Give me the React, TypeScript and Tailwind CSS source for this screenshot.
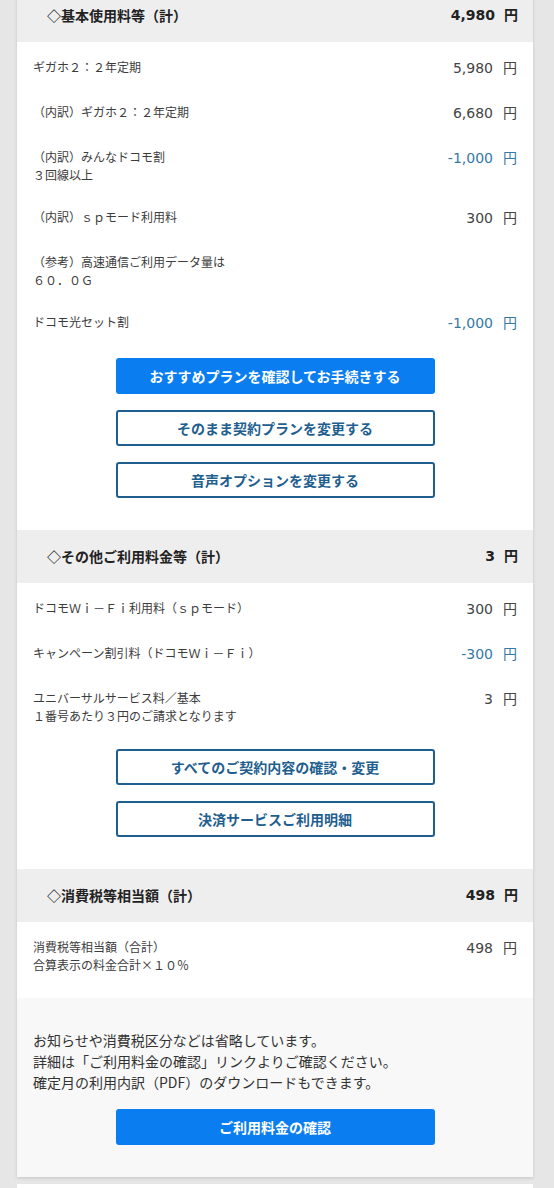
type Row = {
  label: string[];
  amount?: string;
  minus?: boolean;
};

type Btn = {
  label: string;
  primary?: boolean;
};

type Section = {
  title: string;
  total: string;
  rows: Row[];
  buttons?: Btn[];
  last?: boolean;
};

const jp = "font-['Noto_Sans_CJK_JP',sans-serif]";
const num = "font-['DejaVu_Sans','Noto_Sans_CJK_JP',sans-serif]";

const sections: Section[] = [
  {
    title: "◇基本使用料等（計）",
    total: "4,980",
    rows: [
      { label: ["ギガホ２：２年定期"], amount: "5,980" },
      { label: ["（内訳）ギガホ２：２年定期"], amount: "6,680" },
      { label: ["（内訳）みんなドコモ割", "３回線以上"], amount: "-1,000", minus: true },
      { label: ["（内訳）ｓｐモード利用料"], amount: "300" },
      { label: ["（参考）高速通信ご利用データ量は", "６０．０Ｇ"] },
      { label: ["ドコモ光セット割"], amount: "-1,000", minus: true },
    ],
    buttons: [
      { label: "おすすめプランを確認してお手続きする", primary: true },
      { label: "そのまま契約プランを変更する" },
      { label: "音声オプションを変更する" },
    ],
  },
  {
    title: "◇その他ご利用料金等（計）",
    total: "3",
    rows: [
      { label: ["ドコモＷｉ－Ｆｉ利用料（ｓｐモード）"], amount: "300" },
      { label: ["キャンペーン割引料（ドコモＷｉ－Ｆｉ）"], amount: "-300", minus: true },
      { label: ["ユニバーサルサービス料／基本", "１番号あたり３円のご請求となります"], amount: "3" },
    ],
    buttons: [
      { label: "すべてのご契約内容の確認・変更" },
      { label: "決済サービスご利用明細" },
    ],
  },
  {
    title: "◇消費税等相当額（計）",
    total: "498",
    rows: [{ label: ["消費税等相当額（合計）", "合算表示の料金合計×１０％"], amount: "498" }],
    last: true,
  },
];

function Button({ btn }: { btn: Btn }) {
  return (
    <button
      type="button"
      className={`flex h-9 w-[319px] items-center justify-center rounded-[3px] text-[14px] font-bold ${jp} ${
        btn.primary
          ? "bg-[#0a7ef0] text-white"
          : "border-2 border-[#1f5f8f] bg-white text-[#1f5f8f]"
      }`}
    >
      {btn.label}
    </button>
  );
}

function ChargeSection({ section }: { section: Section }) {
  return (
    <section>
      <div className="flex h-[53px] items-center justify-between bg-[#eeeeee] pl-[30px] pr-[15px] text-[#222]">
        <h2 className={`text-[14px] font-bold ${jp}`}>{section.title}</h2>
        <p className={`flex items-center gap-[9px] text-[14px] font-bold ${num}`}>
          <span>{section.total}</span>
          <span>円</span>
        </p>
      </div>

      <div className={`bg-white px-4 pt-4 ${section.last ? "pb-6" : "pb-8"}`}>
        <div className="flex flex-col gap-6">
          {section.rows.map((row) => (
            <div key={row.label[0]} className="flex items-start justify-between">
              <div className={`text-[12px] leading-[18px] text-[#3c3c3c] ${jp}`}>
                {row.label.map((line) => (
                  <p key={line}>{line}</p>
                ))}
              </div>
              {row.amount && (
                <p
                  className={`flex items-center gap-[10px] text-[14px] leading-[21px] ${num} ${
                    row.minus ? "text-[#3579a6]" : "text-[#444]"
                  }`}
                >
                  <span>{row.amount}</span>
                  <span>円</span>
                </p>
              )}
            </div>
          ))}
        </div>

        {section.buttons && (
          <div className="mt-6 flex flex-col items-center gap-4">
            {section.buttons.map((btn) => (
              <Button key={btn.label} btn={btn} />
            ))}
          </div>
        )}
      </div>
    </section>
  );
}

export default function App() {
  return (
    <div className="min-h-[1188px] overflow-hidden bg-[#e6e6e6]">
      <div className="-mt-[11px] ml-[17px] w-[516px] bg-white shadow-[0_1px_3px_rgba(0,0,0,0.15)]">
        {sections.map((s) => (
          <ChargeSection key={s.title} section={s} />
        ))}

        <div className="bg-[#f8f8f8] px-4 pt-8 pb-8">
          <div className={`text-[14px] leading-[21px] text-[#333] ${jp}`}>
            <p>お知らせや消費税区分などは省略しています。</p>
            <p>詳細は「ご利用料金の確認」リンクよりご確認ください。</p>
            <p>確定月の利用内訳（PDF）のダウンロードもできます。</p>
          </div>
          <div className="mt-4 flex justify-center">
            <Button btn={{ label: "ご利用料金の確認", primary: true }} />
          </div>
        </div>
      </div>

      <div className="mt-[7px] ml-[17px] h-[20px] w-[516px] bg-white" />
    </div>
  );
}
